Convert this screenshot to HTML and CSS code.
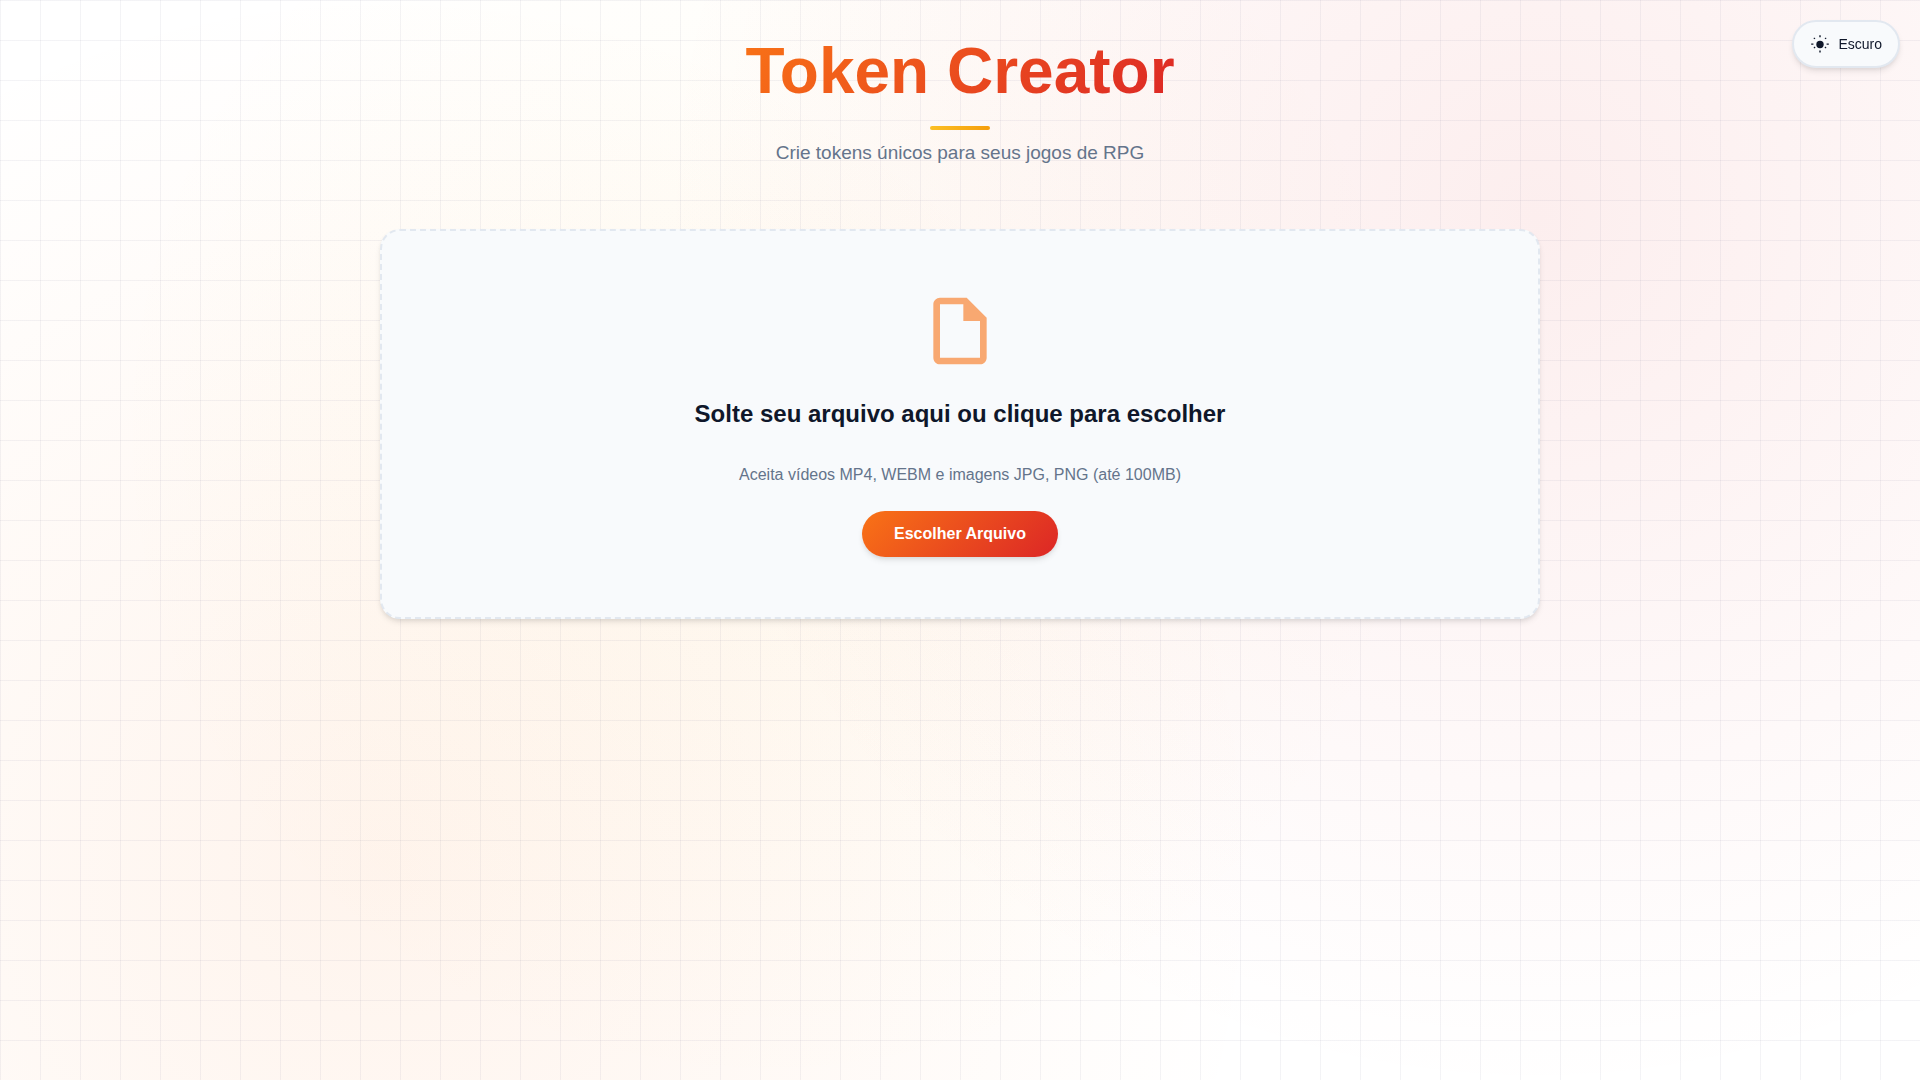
FILE: index.html
```html
<!DOCTYPE html>
<html lang="pt-BR">
<head>
  <meta charset="UTF-8">
  <meta name="viewport" content="width=device-width, initial-scale=1">
  <title>Token Creator</title>
  <link rel="stylesheet" href="styles.css">
</head>
<body>
  <button class="theme-toggle" type="button">
    <svg class="theme-icon" viewBox="0 0 20 20" aria-hidden="true">
      <circle cx="10" cy="10.5" r="3.7"/>
      <path d="M9.3 1.2h1.4v2H9.3zM9.3 16.4h1.4v2.2H9.3zM1.2 9.4h2.2v1.4H1.2zM16.6 9.4h2.2v1.4h-2.2z"/>
      <path d="M4.2 3.4l1.2 1-.8.8-1.2-1zM15.8 3.4l.8.8-1.2 1-.8-.8zM4.7 12.6l.8.8-1.2 1.2-.8-.8zM15.3 12.6l1.2 1.2-.8.8-1.2-1.2z"/>
    </svg>
    <span>Escuro</span>
  </button>
  <div class="container">
    <header class="header">
      <h1 class="title">Token Creator</h1>
      <p class="subtitle">Crie tokens únicos para seus jogos de RPG</p>
    </header>
    <main class="upload-area">
      <svg class="upload-icon" viewBox="0 0 24 24" aria-hidden="true">
        <path d="M14 2H6c-1.1 0-2 .9-2 2v16c0 1.1.9 2 2 2h12c1.1 0 2-.9 2-2V8l-6-6zM6 20V4h7v5h5v11H6z"/>
      </svg>
      <h2 class="upload-title">Solte seu arquivo aqui ou clique para escolher</h2>
      <p class="upload-hint">Aceita vídeos MP4, WEBM e imagens JPG, PNG (até 100MB)</p>
      <button class="upload-button" type="button">Escolher Arquivo</button>
    </main>
  </div>
</body>
</html>
```
FILE: styles.css
```css
* {
  margin: 0;
  padding: 0;
  box-sizing: border-box;
}

body {
  min-height: 100vh;
  font-family: "Liberation Sans", Arial, sans-serif;
  font-size: 16px;
  line-height: 24px;
  color: #0f172a;
  background-color: #ffffff;
  background-image:
    linear-gradient(rgba(30, 30, 80, 0.05) 1px, transparent 1px),
    linear-gradient(90deg, rgba(30, 30, 80, 0.05) 1px, transparent 1px),
    radial-gradient(circle at 20% 80%, rgba(249, 115, 22, 0.08) 0%, transparent 50%),
    radial-gradient(circle at 80% 20%, rgba(220, 38, 38, 0.08) 0%, transparent 50%),
    radial-gradient(circle at 40% 40%, rgba(251, 191, 36, 0.05) 0%, transparent 50%);
  background-size: 40px 40px, 40px 40px, auto, auto, auto;
}

.container {
  max-width: 1200px;
  margin: 0 auto;
  padding: 20px;
}

.theme-toggle {
  position: fixed;
  top: 20px;
  right: 20px;
  display: flex;
  align-items: center;
  gap: 8px;
  height: 48px;
  padding: 0 16px;
  border: 2px solid #e2e8f0;
  border-radius: 24px;
  background: #f8fafc;
  color: #0f172a;
  font-family: inherit;
  font-size: 14px;
  box-shadow: 0 4px 6px -1px rgba(0, 0, 0, 0.1), 0 2px 4px -1px rgba(0, 0, 0, 0.06);
  cursor: pointer;
}

.theme-icon {
  width: 20px;
  height: 20px;
  fill: currentColor;
}

.header {
  display: flex;
  flex-direction: column;
  align-items: center;
  padding-top: 12px;
  margin-bottom: 62px;
  text-align: center;
}

.title {
  font-size: 64px;
  line-height: 78px;
  background: linear-gradient(135deg, #f97316, #dc2626);
  background-clip: text;
  -webkit-background-clip: text;
  color: transparent;
}

.header::before {
  content: "";
  order: 1;
  width: 60px;
  height: 4px;
  margin: 16px 0 8px;
  border-radius: 2px;
  background: linear-gradient(90deg, #fbbf24, #f59e0b);
}

.subtitle {
  order: 2;
  font-size: 19px;
  line-height: 29px;
  color: #64748b;
}

.upload-area {
  display: flex;
  flex-direction: column;
  align-items: center;
  padding: 60px 40px;
  border: 2px dashed #e2e8f0;
  border-radius: 20px;
  background: #f8fafc;
  text-align: center;
  box-shadow: 0 4px 6px -1px rgba(0, 0, 0, 0.1), 0 2px 4px -1px rgba(0, 0, 0, 0.06);
}

.upload-icon {
  width: 80px;
  height: 80px;
  fill: #f97316;
  opacity: 0.6;
}

.upload-title {
  margin: 24px 0 31px;
  font-size: 24px;
  line-height: 37px;
}

.upload-hint {
  margin-bottom: 24px;
  color: #64748b;
}

.upload-button {
  height: 46px;
  padding: 0 32px;
  border: none;
  border-radius: 23px;
  background: linear-gradient(135deg, #f97316, #dc2626);
  color: #ffffff;
  font-family: inherit;
  font-size: 16px;
  font-weight: 600;
  box-shadow: 0 4px 6px -1px rgba(0, 0, 0, 0.1), 0 2px 4px -1px rgba(0, 0, 0, 0.06);
  cursor: pointer;
}
```
